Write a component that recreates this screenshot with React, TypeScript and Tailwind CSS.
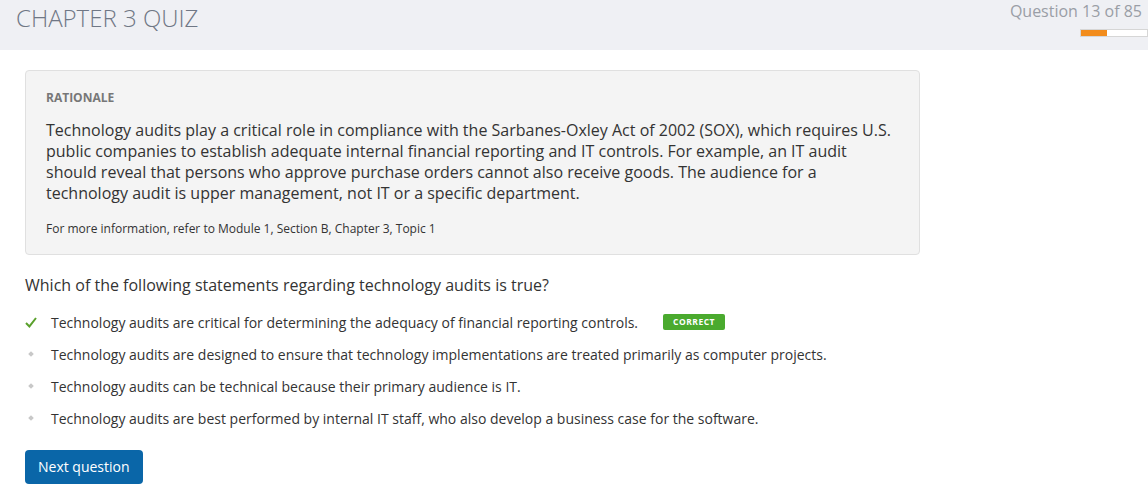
export default function App() {
  const answers = [
    { text: "Technology audits are critical for determining the adequacy of financial reporting controls.", correct: true },
    { text: "Technology audits are designed to ensure that technology implementations are treated primarily as computer projects.", correct: false },
    { text: "Technology audits can be technical because their primary audience is IT.", correct: false },
    { text: "Technology audits are best performed by internal IT staff, who also develop a business case for the software.", correct: false },
  ];

  return (
    <div className="min-h-screen bg-white font-['Open_Sans',sans-serif] text-[#333]">
      <div className="flex h-[50px] justify-between bg-[#eff0f4]">
        <h1 className="pl-4 pt-[2px] text-[24px] font-light leading-[32px] text-[#6f7785]">CHAPTER 3 QUIZ</h1>
        <div className="flex flex-col items-end pr-[6px]">
          <div className="text-[16px] leading-[22px] text-[#9a9ea6]">Question 13 of 85</div>
          <div className="mt-[7px] -mr-[6px] flex h-[8px] w-[68px] border border-[#d6d6d6] bg-white">
            <div className="h-full w-[26px] bg-[#f28c1c]" />
          </div>
        </div>
      </div>

      <div className="px-[25px] pt-5">
        <div className="w-[895px] rounded-[4px] border border-[#e0e0e0] bg-[#f4f4f4] px-5 pb-[17px] pt-[19px]">
          <div className="text-[12px] font-bold leading-[16px] text-[#777]">RATIONALE</div>
          <p className="mt-[14px] text-[16px] leading-[21px] text-[#333]">
            Technology audits play a critical role in compliance with the Sarbanes-Oxley Act of 2002 (SOX), which requires U.S. public companies to establish adequate internal financial reporting and IT controls. For example, an IT audit should reveal that persons who approve purchase orders cannot also receive goods. The audience for a technology audit is upper management, not IT or a specific department.
          </p>
          <p className="mt-[17px] text-[12px] leading-[16px] text-[#333]">For more information, refer to Module 1, Section B, Chapter 3, Topic 1</p>
        </div>

        <div className="mt-[19px] text-[16px] leading-[22px] text-[#333]">Which of the following statements regarding technology audits is true?</div>

        <ul className="mt-[16px] flex flex-col gap-[12px]">
          {answers.map((a) => (
            <li key={a.text} className="flex h-[20px] items-center text-[14px] text-[#333]">
              <span className="flex w-[26px] items-center">
                {a.correct ? (
                  <svg width="12" height="11" viewBox="0 0 12 11">
                    <path d="M1 6 L4.4 9.4 L11 1" fill="none" stroke="#5aa02c" strokeWidth="2" />
                  </svg>
                ) : (
                  <span className="ml-[4px] inline-block h-[4px] w-[4px] rotate-45 bg-[#c8c8c8]" />
                )}
              </span>
              <span>{a.text}</span>
              {a.correct && (
                <span className="ml-[25px] rounded-[2px] bg-[#4aaa2e] px-[10px] text-[8.5px] font-bold leading-[16px] tracking-[0.5px] text-white">CORRECT</span>
              )}
            </li>
          ))}
        </ul>

        <button className="mt-[22px] rounded-[4px] bg-[#0a66a8] px-[13px] text-[14px] leading-[34px] text-white">Next question</button>
      </div>
    </div>
  );
}
